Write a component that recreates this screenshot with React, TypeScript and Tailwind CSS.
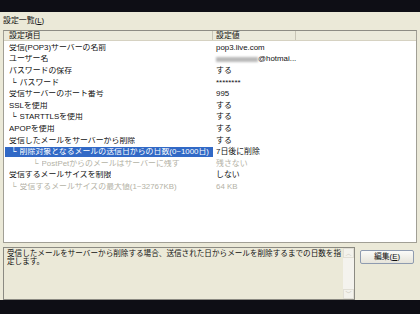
type Row = {
  label: string;
  value: React.ReactNode;
  indent?: number;
  disabled?: boolean;
  selected?: boolean;
};

const rows: Row[] = [
  { label: "受信(POP3)サーバーの名前", value: "pop3.live.com" },
  {
    label: "ユーザー名",
    value: (
      <span className="flex items-center">
        <span className="inline-block h-[5px] w-[42px] bg-[#b9b9b9] blur-[1px]" />
        <span>@hotmai...</span>
      </span>
    ),
  },
  { label: "パスワードの保存", value: "する" },
  { label: "パスワード", value: "********", indent: 1 },
  { label: "受信サーバーのポート番号", value: "995" },
  { label: "SSLを使用", value: "する" },
  { label: "STARTTLSを使用", value: "する", indent: 1 },
  { label: "APOPを使用", value: "する" },
  { label: "受信したメールをサーバーから削除", value: "する" },
  {
    label: "削除対象となるメールの送信日からの日数(0~1000日)",
    value: "7日後に削除",
    indent: 1,
    selected: true,
  },
  { label: "PostPetからのメールはサーバーに残す", value: "残さない", indent: 2, disabled: true },
  { label: "受信するメールサイズを制限", value: "しない" },
  { label: "受信するメールサイズの最大値(1~32767KB)", value: "64 KB", indent: 1, disabled: true },
];

function ListRow({ row }: { row: Row }) {
  const pad = row.indent === 2 ? "pl-[28px]" : row.indent === 1 ? "pl-[6px]" : "pl-[4px]";
  const color = row.disabled ? "text-[#b4b2a6]" : "text-[#111]";
  return (
    <div className="flex h-[11.6px] items-center">
      <div className="w-[209px] shrink-0 pl-[1px]">
        <div
          className={`flex h-[10px] items-center overflow-hidden whitespace-nowrap ${pad} ${
            row.selected ? "bg-[#3169c6] text-white" : color
          }`}
        >
          {row.indent ? <span className="mr-[3px]">└</span> : null}
          <span className="truncate">{row.label}</span>
        </div>
      </div>
      <div className={`pl-[3px] whitespace-nowrap ${color}`}>{row.value}</div>
    </div>
  );
}

export default function App() {
  return (
    <div
      className="flex h-[314px] w-[420px] flex-col overflow-hidden bg-[#ebe9d8] text-[7.9px] leading-none text-[#111]"
      style={{ fontFamily: '"Liberation Sans", "Noto Sans CJK JP", sans-serif' }}
    >
      <div className="h-[12px] shrink-0 bg-[#0e0e15]" />
      <div className="flex h-[18px] shrink-0 items-center pl-[3px]">
        設定一覧(<span className="underline">L</span>)
      </div>

      {/* settings list */}
      <div className="ml-[3px] h-[213px] w-[414px] shrink-0 border border-[#a19f95] border-t-[#8d8c84] bg-white">
        <div className="flex h-[10px] border-b border-[#d6d2c2] bg-[#ebeadb]">
          <div className="flex w-[209px] items-center border-r border-[#c8c5b6] pl-[5px]">設定項目</div>
          <div className="flex w-[83px] items-center border-r border-[#c8c5b6] pl-[3px]">設定値</div>
          <div className="flex-1" />
        </div>
        <div className="pt-[1px]">
          {rows.map((r, i) => (
            <ListRow key={i} row={r} />
          ))}
        </div>
      </div>

      {/* description + edit button */}
      <div className="mt-[4px] flex shrink-0 gap-[5px] pl-[3px]">
        <div className="flex h-[53px] w-[352px] border border-[#8b8a82] bg-[#ebe9d8]">
          <p className="flex-1 pl-[3px] pt-[2px] text-[7.6px] leading-[7.6px]">
            受信したメールをサーバーから削除する場合、送信された日からメールを削除するまでの日数を指定します。
          </p>
          <div className="flex w-[11px] flex-col justify-between bg-[#f4f3ee]">
            <div className="flex h-[10px] items-center justify-center border border-[#e1dfd6] bg-[#f3f2ec] text-[6px] text-[#c9c7ba]">
              ︿
            </div>
            <div className="flex h-[10px] items-center justify-center border border-[#e1dfd6] bg-[#f3f2ec] text-[6px] text-[#c9c7ba]">
              ﹀
            </div>
          </div>
        </div>
        <div>
          <button className="mt-[3px] flex h-[14px] w-[54px] items-center justify-center rounded-[2px] border border-[#8e9bb0] bg-gradient-to-b from-[#fbfbf8] to-[#e6e4da] text-[7.8px]">
            編集(<span className="underline">E</span>)
          </button>
        </div>
      </div>

      <div className="mt-auto h-[14px] shrink-0 bg-[#0e0e15]" />
    </div>
  );
}
